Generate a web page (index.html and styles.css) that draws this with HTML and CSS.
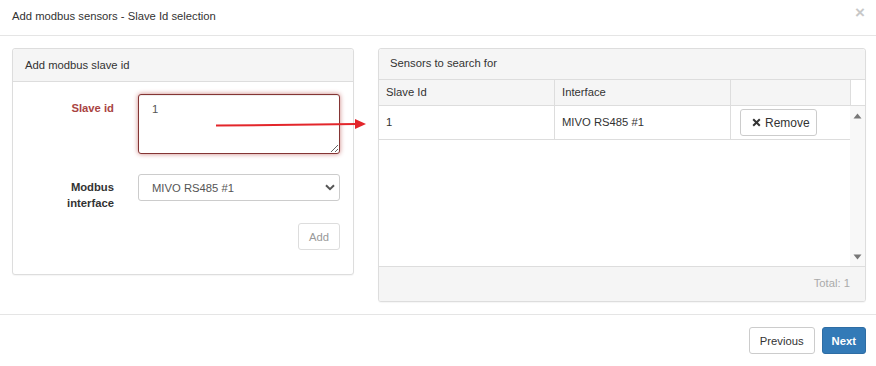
FILE: index.html
```html
<!DOCTYPE html>
<html>
<head>
  <meta charset="utf-8">
  <link rel="stylesheet" href="styles.css">
</head>
<body>
  <div class="modal">
    <div class="modal-header">
      <h4 class="modal-title">Add modbus sensors - Slave Id selection</h4>
      <span class="close">&times;</span>
    </div>

    <div class="modal-body">
      <div class="panel panel-left">
        <div class="panel-heading">Add modbus slave id</div>
        <div class="panel-body">
          <div class="form-row has-error">
            <label class="form-label" for="slaveId">Slave id</label>
            <textarea id="slaveId" class="form-control textarea">1</textarea>
          </div>
          <div class="form-row">
            <label class="form-label">Modbus<br>interface</label>
            <div class="form-control select">
              <span>MIVO RS485 #1</span>
              <svg class="chevron" width="10" height="7" viewBox="0 0 10 7">
                <path d="M1 1.2 L5 5.2 L9 1.2" fill="none" stroke="#555" stroke-width="2"/>
              </svg>
            </div>
          </div>
          <div class="form-actions">
            <button class="btn btn-default" disabled>Add</button>
          </div>
        </div>
      </div>

      <div class="panel panel-right">
        <div class="panel-heading">Sensors to search for</div>
        <div class="grid-head">
          <div class="cell">Slave Id</div>
          <div class="cell">Interface</div>
          <div class="cell"></div>
          <div class="cell cell-scroll"></div>
        </div>
        <div class="grid-body">
          <div class="grid-rows">
            <div class="grid-row">
              <div class="cell">1</div>
              <div class="cell">MIVO RS485 #1</div>
              <div class="cell cell-action">
                <button class="btn btn-default btn-remove">
                  <svg width="9" height="9" viewBox="0 0 9 9">
                    <path d="M1.2 1.2 L7.8 7.8 M7.8 1.2 L1.2 7.8" stroke="#333" stroke-width="2"/>
                  </svg>
                  Remove
                </button>
              </div>
            </div>
          </div>
          <div class="scrollbar">
            <svg width="9" height="6" viewBox="0 0 9 6"><path d="M0.5 5.5 L4.5 0.5 L8.5 5.5 Z" fill="#777"/></svg>
            <svg width="9" height="6" viewBox="0 0 9 6"><path d="M0.5 0.5 L4.5 5.5 L8.5 0.5 Z" fill="#777"/></svg>
          </div>
        </div>
        <div class="grid-footer">Total: 1</div>
      </div>

      <svg class="arrow" width="160" height="14" viewBox="0 0 160 14">
        <path d="M0 8.6 L140 7" stroke="#e3262b" stroke-width="2"/>
        <path d="M139 2 L150 7 L139 12 Z" fill="#e3262b"/>
      </svg>
    </div>

    <div class="modal-footer">
      <button class="btn btn-default">Previous</button>
      <button class="btn btn-primary">Next</button>
    </div>
  </div>
</body>
</html>
```

FILE: styles.css
```css
body {
  margin: 0;
  background: #fff;
  font-family: "Liberation Sans", Arial, sans-serif;
  font-size: 11.25px;
  color: #333;
}

.modal {
  width: 876px;
}

.modal-header {
  display: flex;
  justify-content: space-between;
  align-items: flex-start;
  height: 36px;
  box-sizing: border-box;
  padding: 9px 11px 0 12px;
  border-bottom: 1px solid #e5e5e5;
}

.modal-title {
  margin: 0;
  font-size: 11.25px;
  font-weight: normal;
  line-height: 14px;
}

.close {
  font-size: 17px;
  font-weight: bold;
  line-height: 10px;
  color: #c8c8c8;
  margin-top: -1px;
}

.modal-body {
  position: relative;
  display: flex;
  align-items: flex-start;
  gap: 24px;
  padding: 12px 10px 12px 12px;
}

.panel {
  border: 1px solid #ddd;
  border-radius: 3px;
  background: #fff;
  box-shadow: 0 1px 1px rgba(0, 0, 0, 0.04);
}

.panel-left {
  width: 342px;
  box-sizing: border-box;
}

.panel-right {
  flex: 1;
  overflow: hidden;
}

.panel-heading {
  background: #f5f5f5;
  border-bottom: 1px solid #ddd;
  padding: 0 12px;
  border-radius: 3px 3px 0 0;
}

.panel-left .panel-heading {
  height: 32px;
  line-height: 33px;
}

.panel-right .panel-heading {
  height: 30px;
  line-height: 29px;
  padding-left: 11px;
}

.panel-body {
  padding: 12px 12px 24px 12px;
}

.form-row {
  display: grid;
  grid-template-columns: 89px 202px;
  column-gap: 24px;
  margin-bottom: 20px;
}

.form-row + .form-row {
  margin-bottom: 12px;
}

.form-label {
  text-align: right;
  font-weight: bold;
  line-height: 16px;
  padding-top: 5px;
}

.has-error .form-label {
  color: #a94442;
  padding-top: 6px;
}

.form-control {
  box-sizing: border-box;
  width: 202px;
  border: 1px solid #ccc;
  border-radius: 3px;
  font-family: inherit;
  font-size: 11.25px;
  color: #555;
  background: #fff;
}

.textarea {
  display: block;
  height: 60px;
  padding: 6px 13px;
  line-height: 16px;
  resize: vertical;
  border-color: #843534;
  box-shadow: inset 0 1px 1px rgba(0, 0, 0, 0.075), 0 0 5px #ce8483;
  outline: none;
}

.select {
  display: flex;
  align-items: center;
  justify-content: space-between;
  height: 27px;
  padding: 0 4px 0 13px;
}

.form-actions {
  display: flex;
  justify-content: flex-end;
  padding-right: 1px;
}

.btn {
  box-sizing: border-box;
  height: 27px;
  padding: 0 10px;
  border: 1px solid #ccc;
  border-radius: 3px;
  background: #fff;
  font-family: inherit;
  font-size: 11.25px;
  color: #333;
  cursor: pointer;
}

.btn:disabled {
  color: #999;
  border-color: #ddd;
  cursor: not-allowed;
}

.btn-primary {
  padding: 0 9px;
  background: #337ab7;
  border-color: #2e6da4;
  color: #fff;
  font-weight: bold;
}

.grid-head,
.grid-row {
  display: grid;
  grid-template-columns: 176px 176px 120px 14px;
}

.grid-head {
  height: 25px;
  background: #f5f5f5;
  border-bottom: 1px solid #ddd;
}

.grid-head .cell {
  line-height: 24px;
  padding-left: 7px;
  border-right: 1px solid #ddd;
}

.grid-head .cell-scroll {
  background: #fff;
  border-right: none;
}

.grid-body {
  display: flex;
  height: 160px;
}

.grid-rows {
  width: 471px;
}

.grid-row {
  grid-template-columns: 176px 176px 119px;
  height: 34px;
  border-bottom: 1px solid #ddd;
  box-sizing: border-box;
}

.grid-row .cell {
  line-height: 33px;
  padding-left: 7px;
  border-right: 1px solid #ddd;
}

.grid-row .cell-action {
  display: flex;
  align-items: center;
  padding-left: 9px;
  border-right: none;
}

.btn-remove {
  display: flex;
  align-items: center;
  gap: 4px;
  width: 77px;
  padding: 0 0 0 11px;
  font-size: 12px;
}

.scrollbar {
  flex: 1;
  display: flex;
  flex-direction: column;
  justify-content: space-between;
  align-items: center;
  padding: 7px 0 6px;
  background: #f8f8f8;
}

.grid-footer {
  height: 35px;
  box-sizing: border-box;
  border-top: 1px solid #ddd;
  background: #f5f5f5;
  text-align: right;
  line-height: 33px;
  padding-right: 15px;
  color: #aaa;
}

.arrow {
  position: absolute;
  left: 216px;
  top: 81px;
}

.modal-footer {
  display: flex;
  justify-content: flex-end;
  gap: 7px;
  padding: 12px 10px 12px 12px;
  border-top: 1px solid #e5e5e5;
}
```
